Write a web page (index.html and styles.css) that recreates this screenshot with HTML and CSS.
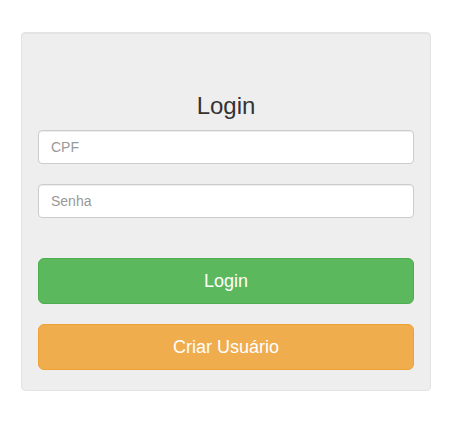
FILE: index.html
```html
<!DOCTYPE html>
<html lang="pt-BR">
<head>
<meta charset="utf-8">
<title>Login</title>
<link rel="stylesheet" href="styles.css">
</head>
<body>
<div class="page">
  <form class="card">
    <h3 class="title">Login</h3>
    <input class="field" type="text" placeholder="CPF">
    <input class="field" type="password" placeholder="Senha">
    <div class="actions">
      <button class="btn btn-success" type="button">Login</button>
      <button class="btn btn-warning" type="button">Criar Usuário</button>
    </div>
  </form>
</div>
</body>
</html>
```
FILE: styles.css
```css
* { box-sizing: border-box; }
html, body { margin: 0; padding: 0; background: #fff; }
body {
  font-family: "Liberation Sans", Arial, Helvetica, sans-serif;
  font-size: 14px;
  color: #333;
}
.page {
  padding: 32px 0 0 21px;
}
.card {
  width: 410px;
  display: flex;
  flex-direction: column;
  padding: 60px 16px 20px;
  background: #eeeeee;
  border: 1px solid #e3e3e3;
  border-radius: 4px;
  box-shadow: inset 0 1px 1px rgba(0,0,0,.05);
}
.title {
  margin: 0 0 11px;
  font-size: 24px;
  font-weight: 500;
  line-height: 26px;
  text-align: center;
  color: #333;
}
.field {
  display: block;
  width: 100%;
  height: 34px;
  padding: 6px 12px;
  margin: 0 0 20px;
  font-family: inherit;
  font-size: 14px;
  line-height: 20px;
  color: #555;
  background: #fff;
  border: 1px solid #ccc;
  border-radius: 4px;
  box-shadow: inset 0 1px 1px rgba(0,0,0,.075);
  outline: none;
}
.field::placeholder { color: #999; }
.actions {
  display: flex;
  flex-direction: column;
  gap: 20px;
  margin-top: 20px;
}
.btn {
  display: block;
  width: 100%;
  height: 46px;
  padding: 10px 16px;
  font-family: inherit;
  font-size: 18px;
  line-height: 24px;
  color: #fff;
  border: 1px solid transparent;
  border-radius: 6px;
  cursor: pointer;
}
.btn-success { background: #5cb85c; border-color: #4cae4c; }
.btn-warning { background: #f0ad4e; border-color: #eea236; }
```
